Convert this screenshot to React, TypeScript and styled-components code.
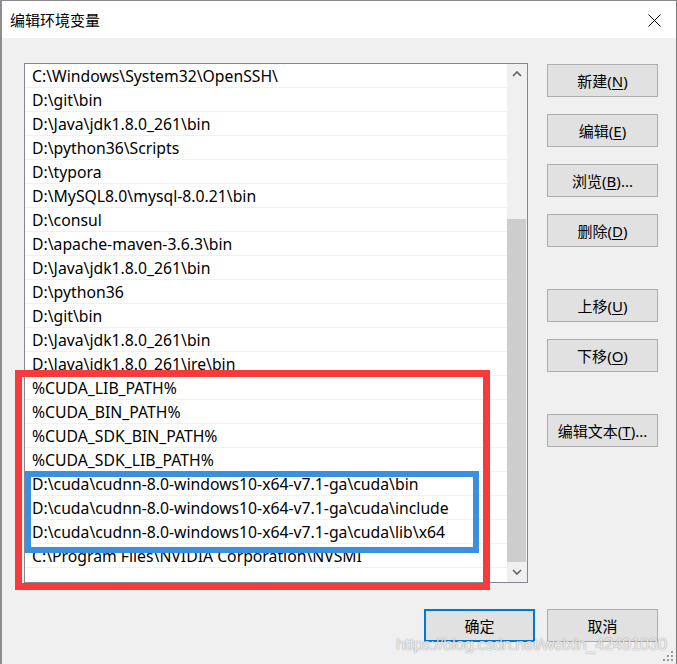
import React from "react";
import styled, { createGlobalStyle } from "styled-components";

const GlobalStyle = createGlobalStyle`
  html, body {
    margin: 0;
    padding: 0;
    background: #f0f0f0;
  }
  * {
    box-sizing: border-box;
  }
`;

const Window = styled.div`
  position: relative;
  width: 677px;
  height: 664px;
  display: flex;
  flex-direction: column;
  background: #f0f0f0;
  border-top: 1px solid #8a8a8a;
  border-left: 2px solid #8d8d8d;
  border-right: 1px solid #7a7a7a;
  font-family: "Noto Sans", "Noto Sans CJK SC", sans-serif;
  color: #000;
  overflow: hidden;
`;

const TitleBar = styled.div`
  height: 37px;
  display: flex;
  align-items: center;
  justify-content: space-between;
  background: #fff;
  padding-left: 8px;
  padding-right: 15px;
`;

const Title = styled.div`
  font-family: "Noto Sans CJK SC", sans-serif;
  font-size: 15px;
  line-height: 20px;
  margin-top: 1px;
`;

const CloseButton = styled.div`
  display: flex;
  align-items: center;
  justify-content: center;
  width: 14px;
  height: 14px;
  margin-top: 1px;
`;

const Body = styled.div`
  flex: 1;
  display: flex;
  flex-direction: column;
  padding: 25px 18px 0 22px;
`;

const Main = styled.div`
  display: flex;
  gap: 19px;
`;

const ListBox = styled.div`
  position: relative;
  width: 504px;
  height: 520px;
  border: 1px solid #828790;
  background: #fff;
  display: flex;
`;

const Rows = styled.div`
  flex: 1;
  overflow: hidden;
  display: flex;
  flex-direction: column;
`;

const Row = styled.div`
  flex: none;
  height: 24px;
  padding: 2px 0 0 7px;
  border-bottom: 1px solid #f0f0f0;
  font-size: 15.75px;
  line-height: 21px;
  white-space: nowrap;
`;

const ScrollBar = styled.div`
  width: 20px;
  display: flex;
  flex-direction: column;
  background: #f0f0f0;
`;

const ArrowBox = styled.div`
  height: 20px;
  display: flex;
  align-items: center;
  justify-content: center;
`;

const Track = styled.div`
  flex: 1;
  display: flex;
  flex-direction: column;
  justify-content: flex-end;
`;

const Thumb = styled.div`
  height: 343px;
  margin: 0 1px 0 0;
  background: #cdcdcd;
`;

const Mark = styled.div<{ $color: string; $width: number }>`
  position: absolute;
  border: ${(p) => p.$width}px solid ${(p) => p.$color};
  pointer-events: none;
`;

const RedMark = styled(Mark)`
  left: -10px;
  top: 306px;
  width: 475px;
  height: 220px;
`;

const BlueMark = styled(Mark)`
  left: 0;
  top: 407px;
  width: 454px;
  height: 82px;
`;

const ButtonColumn = styled.div`
  display: flex;
  flex-direction: column;
  padding-top: 1px;
  gap: 17px;
`;

const Button = styled.div<{ $spaced?: boolean; $default?: boolean }>`
  width: 111px;
  height: 33px;
  display: flex;
  align-items: center;
  justify-content: center;
  background: #e1e1e1;
  border: ${(p) => (p.$default ? "2px solid #0078d7" : "1px solid #adadad")};
  font-size: 15px;
  line-height: 20px;
  margin-top: ${(p) => (p.$spaced ? "25px" : "0")};
  white-space: nowrap;

  u {
    text-underline-offset: 2px;
    text-decoration-thickness: 1px;
  }
`;

const Footer = styled.div`
  display: flex;
  justify-content: flex-end;
  gap: 12px;
  margin-top: 26px;
`;

const Watermark = styled.div`
  position: absolute;
  left: 394px;
  top: 634px;
  font-family: "Liberation Sans", sans-serif;
  font-size: 17px;
  letter-spacing: -0.5px;
  line-height: 20px;
  color: rgba(255, 255, 255, 0.8);
  text-shadow: 0 0 1px rgba(0, 0, 0, 0.35), 0 0 2px rgba(0, 0, 0, 0.15);
  white-space: nowrap;
  pointer-events: none;
`;

const Grip = styled.svg`
  position: absolute;
  right: 2px;
  bottom: 2px;
`;

const paths = [
  "C:\\Windows\\System32\\OpenSSH\\",
  "D:\\git\\bin",
  "D:\\Java\\jdk1.8.0_261\\bin",
  "D:\\python36\\Scripts",
  "D:\\typora",
  "D:\\MySQL8.0\\mysql-8.0.21\\bin",
  "D:\\consul",
  "D:\\apache-maven-3.6.3\\bin",
  "D:\\Java\\jdk1.8.0_261\\bin",
  "D:\\python36",
  "D:\\git\\bin",
  "D:\\Java\\jdk1.8.0_261\\bin",
  "D:\\Java\\jdk1.8.0_261\\jre\\bin",
  "%CUDA_LIB_PATH%",
  "%CUDA_BIN_PATH%",
  "%CUDA_SDK_BIN_PATH%",
  "%CUDA_SDK_LIB_PATH%",
  "D:\\cuda\\cudnn-8.0-windows10-x64-v7.1-ga\\cuda\\bin",
  "D:\\cuda\\cudnn-8.0-windows10-x64-v7.1-ga\\cuda\\include",
  "D:\\cuda\\cudnn-8.0-windows10-x64-v7.1-ga\\cuda\\lib\\x64",
  "C:\\Program Files\\NVIDIA Corporation\\NVSMI",
  "",
];

const Chevron = ({ up }: { up?: boolean }) => (
  <svg width="10" height="6" viewBox="0 0 10 6">
    <polyline
      points={up ? "1,5 5,1 9,5" : "1,1 5,5 9,1"}
      fill="none"
      stroke="#606060"
      strokeWidth="1.6"
    />
  </svg>
);

const sideButtons: { label: string; key: string; tail?: string; spaced?: boolean }[] = [
  { label: "新建", key: "N" },
  { label: "编辑", key: "E" },
  { label: "浏览", key: "B", tail: "..." },
  { label: "删除", key: "D" },
  { label: "上移", key: "U", spaced: true },
  { label: "下移", key: "O" },
  { label: "编辑文本", key: "T", tail: "...", spaced: true },
];

export default function App() {
  return (
    <>
      <GlobalStyle />
      <Window>
        <TitleBar>
          <Title>编辑环境变量</Title>
          <CloseButton>
            <svg width="13" height="13" viewBox="0 0 13 13">
              <path d="M0.5 0.5 L12.5 12.5 M12.5 0.5 L0.5 12.5" stroke="#000" strokeWidth="1" />
            </svg>
          </CloseButton>
        </TitleBar>
        <Body>
          <Main>
            <ListBox>
              <Rows>
                {paths.map((p, i) => (
                  <Row key={i}>{p}</Row>
                ))}
              </Rows>
              <ScrollBar>
                <ArrowBox>
                  <Chevron up />
                </ArrowBox>
                <Track>
                  <Thumb />
                </Track>
                <ArrowBox>
                  <Chevron />
                </ArrowBox>
              </ScrollBar>
              <RedMark $color="#f73b3b" $width={7} />
              <BlueMark $color="#3b8fdf" $width={6} />
            </ListBox>
            <ButtonColumn>
              {sideButtons.map((b) => (
                <Button key={b.key} $spaced={b.spaced}>
                  {b.label}(<u>{b.key}</u>){b.tail}
                </Button>
              ))}
            </ButtonColumn>
          </Main>
          <Footer>
            <Button $default>确定</Button>
            <Button>取消</Button>
          </Footer>
        </Body>
        <Watermark>https://blog.csdn.net/weixin_42491030</Watermark>
        <Grip width="12" height="12" viewBox="0 0 12 12">
          {[
            [9, 1],
            [5, 5],
            [9, 5],
            [1, 9],
            [5, 9],
            [9, 9],
          ].map(([x, y], i) => (
            <rect key={i} x={x} y={y} width="2" height="2" fill="#9a9a9a" />
          ))}
        </Grip>
      </Window>
    </>
  );
}
